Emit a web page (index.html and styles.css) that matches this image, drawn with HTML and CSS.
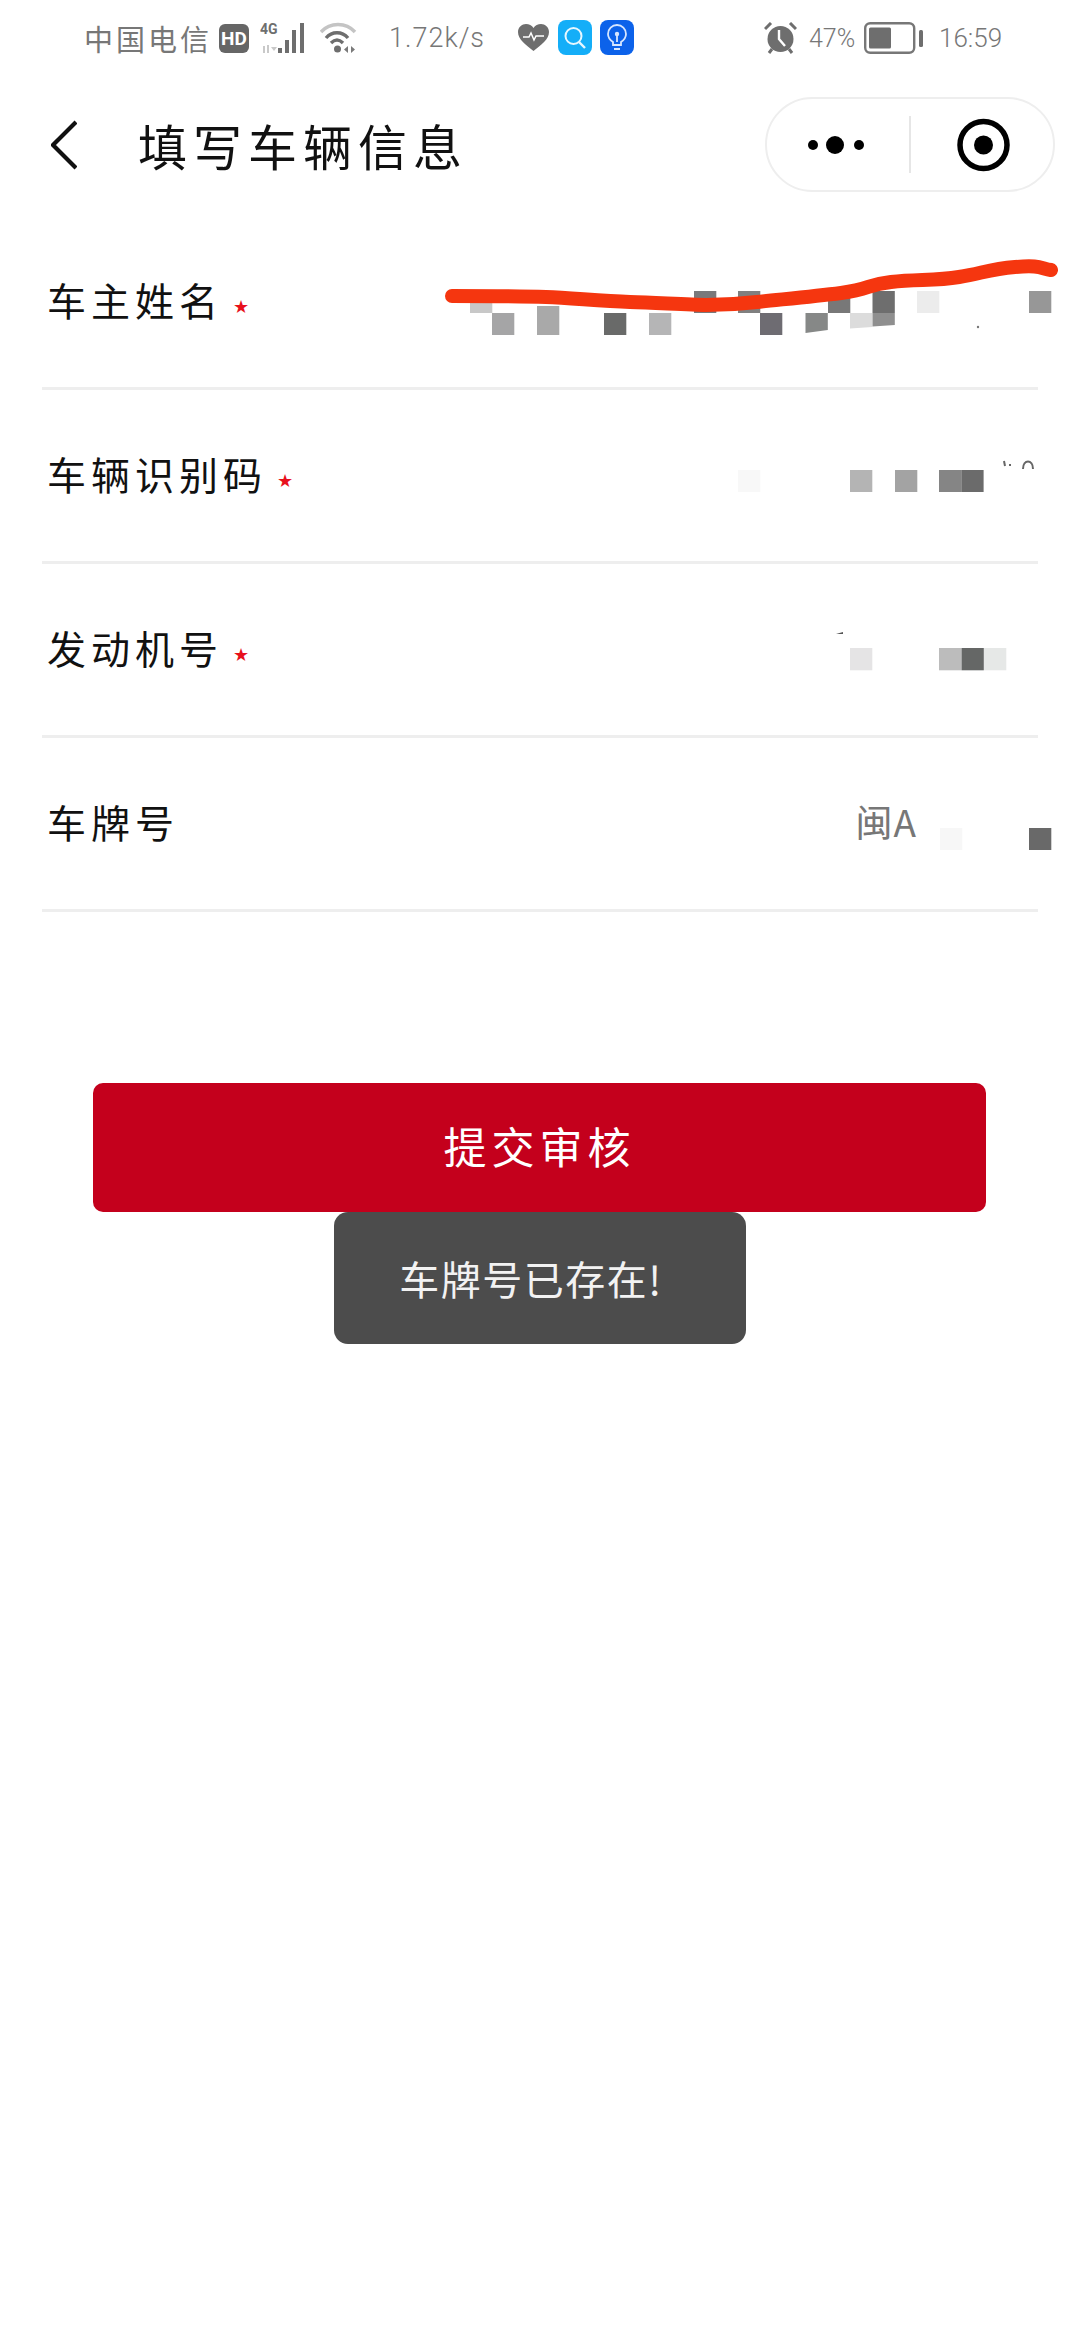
FILE: index.html
```html
<!DOCTYPE html>
<html lang="zh-CN">
<head>
<meta charset="utf-8">
<title>填写车辆信息</title>
<link rel="stylesheet" href="styles.css">
</head>
<body>
<div class="page">
  <div class="status">
    <span class="carrier">中国电信</span>
    <span class="hd">HD</span>
    <svg class="net" width="50" height="32" viewBox="0 0 50 32">
      <text x="0" y="12" class="net-label">4G</text>
      <path d="M4 24v7M8 23v8" stroke="#c9c9c9" stroke-width="2" fill="none"/>
      <path d="M11 25l3 4 3-4z" fill="#c9c9c9"/>
      <rect x="18" y="26" width="4" height="5" fill="#6e6e6e"/>
      <rect x="25" y="18" width="4" height="13" fill="#6e6e6e"/>
      <rect x="32" y="8" width="4" height="23" fill="#6e6e6e"/>
      <rect x="40" y="1" width="4" height="30" fill="#6e6e6e"/>
    </svg>
    <svg class="wifi" width="37" height="32" viewBox="0 0 37 32">
      <path d="M1 10C10 0 26 0 35 10" stroke="#c4c4c4" stroke-width="3.4" fill="none"/>
      <path d="M6 16C12 9 22 9 28 16" stroke="#6e6e6e" stroke-width="3.4" fill="none"/>
      <path d="M11 21C15 17 19 17 23 21" stroke="#6e6e6e" stroke-width="3.4" fill="none"/>
      <circle cx="17.500" cy="27" r="3.500" fill="#6e6e6e"/>
      <path d="M28 24l-4 3.500 4 3.500zM31 24l4 3.500-4 3.500z" fill="#7a7a7a"/>
    </svg>
    <span class="speed">1.72k/s</span>
    <svg class="heart" width="31" height="28" viewBox="0 0 31 28">
      <path d="M15.500 27C8 21 0 15.500 0 8 0 3 4 0 8 0c3 0 6 1.500 7.500 4C17 1.500 20 0 23 0c4 0 8 3 8 8 0 7.500-8 13-15.500 19z" fill="#6e6e6e"/>
      <path d="M5 13h6l2-4 3 7 2-4h8" stroke="#fff" stroke-width="1.500" fill="none"/>
    </svg>
    <svg class="app" width="34" height="35" viewBox="0 0 34 35">
      <rect width="34" height="35" rx="8" fill="#14aef8"/>
      <circle cx="15.500" cy="16" r="8" stroke="#e6f7ff" stroke-width="2" fill="none"/>
      <path d="M21 22l6 6" stroke="#e6f7ff" stroke-width="2.400"/>
    </svg>
    <svg class="app bulb" width="34" height="35" viewBox="0 0 34 35">
      <rect width="34" height="35" rx="8" fill="#0c62ea"/>
      <path d="M13 25v-3c-3-2-5-4-5-8a9 9 0 0 1 18 0c0 4-2 6-5 8v3z" stroke="#d6e6ff" stroke-width="1.800" fill="none"/>
      <path d="M14 29h6M17 15v7" stroke="#d6e6ff" stroke-width="1.800"/>
      <circle cx="17" cy="14" r="2.200" fill="#d6e6ff"/>
    </svg>
    <span class="status-gap"></span>
    <svg class="alarm" width="33" height="32" viewBox="0 0 33 32">
      <circle cx="16.500" cy="17" r="13" fill="#6e6e6e"/>
      <path d="M1 7l6-6M32 7l-6-6" stroke="#6e6e6e" stroke-width="3"/>
      <path d="M5 31l3-4M28 31l-3-4" stroke="#6e6e6e" stroke-width="3"/>
      <path d="M15 8v9l6 7" stroke="#fff" stroke-width="2.400" fill="none"/>
    </svg>
    <span class="percent">47%</span>
    <svg class="battery" width="59" height="32" viewBox="0 0 59 32">
      <rect x="1.200" y="1.200" width="49" height="29.600" rx="5" stroke="#777" stroke-width="2.400" fill="none"/>
      <rect x="5" y="5.500" width="22" height="21" rx="1.500" fill="#6e6e6e"/>
      <rect x="55" y="8" width="4" height="17" rx="1.500" fill="#6e6e6e"/>
    </svg>
    <span class="time">16:59</span>
  </div>

  <header class="nav">
    <svg class="back" width="26" height="50" viewBox="0 0 26 50">
      <path d="M25 2L2 25l23 23" stroke="#111" stroke-width="4.200" fill="none"/>
    </svg>
    <h1 class="title">填写车辆信息</h1>
    <div class="capsule">
      <svg class="more" width="142" height="20" viewBox="0 0 142 20">
        <circle cx="46" cy="10" r="5" fill="#000"/>
        <circle cx="68" cy="10" r="9" fill="#000"/>
        <circle cx="92" cy="10" r="5" fill="#000"/>
      </svg>
      <span class="capsule-divider"></span>
      <svg class="target" width="140" height="56" viewBox="0 0 140 56">
        <circle cx="72.500" cy="28" r="23.500" stroke="#000" stroke-width="5.500" fill="none"/>
        <circle cx="72.500" cy="28" r="9.500" fill="#000"/>
      </svg>
    </div>
  </header>

  <main class="form">
    <div class="row"><span class="label">车主姓名<span class="star">★</span></span></div>
    <div class="row"><span class="label">车辆识别码<span class="star">★</span></span></div>
    <div class="row"><span class="label">发动机号<span class="star">★</span></span></div>
    <div class="row"><span class="label">车牌号</span><span class="value">闽A</span></div>
  </main>

  <button class="submit">提交审核</button>

  <svg class="redaction" width="1080" height="900" viewBox="0 0 1080 900">
    <rect x="470" y="303" width="22.300" height="10" fill="#c8c8c8"/>
    <rect x="492" y="313" width="22.300" height="22" fill="#a5a5a6"/>
    <rect x="537" y="306" width="22.300" height="29" fill="#a9a9a9"/>
    <rect x="604" y="313" width="22.300" height="22" fill="#696a69"/>
    <rect x="649" y="313" width="22.300" height="22" fill="#b5b5b6"/>
    <rect x="694" y="291" width="22.300" height="22" fill="#79797b"/>
    <rect x="738" y="291" width="22.300" height="22" fill="#808080"/>
    <rect x="760" y="313" width="22.300" height="22" fill="#6e6c72"/>
    <path d="M805.500 313h22.300v17l-22.300 3z" fill="#868887"/>
    <rect x="828" y="295" width="22.300" height="18" fill="#787878"/>
    <path d="M850 313h22.300v14l-22.300 1.500z" fill="#dcdcdc"/>
    <rect x="872.500" y="291" width="22.300" height="22" fill="#6e6e6e"/>
    <path d="M872.500 313h22.300v12l-22.300 1.500z" fill="#8f8f8f"/>
    <rect x="917" y="291" width="22.300" height="22" fill="#ececec"/>
    <rect x="1029" y="291" width="22.300" height="22" fill="#979797"/>
    <circle cx="978" cy="327" r="1.200" fill="#777"/>
    <path d="M452 296C490 296 520 296 546 297S600 301 630 302 690 305 706 305 740 304 757 302 810 297 841 293 865 285 891 282 935 281 959 277 990 269 1015 267 1040 268 1051 270" stroke="#f5360f" stroke-width="14" stroke-linecap="round" fill="none"/>

    <rect x="738" y="470" width="22.300" height="22" fill="#f8f8f8"/>
    <rect x="850" y="470" width="22.300" height="22" fill="#b4b4b4"/>
    <rect x="895" y="470" width="22.300" height="22" fill="#a3a3a3"/>
    <rect x="939" y="470" width="22.300" height="22" fill="#858585"/>
    <rect x="961.300" y="470" width="22.300" height="22" fill="#6b6b6b"/>
    <path d="M1004 461l1 5M1010 464v2M1023 469c0-10 10-10 10 0" stroke="#666" stroke-width="2" fill="none"/>

    <path d="M836 634l7-2v2z" fill="#555"/>
    <rect x="850" y="648" width="22.300" height="22.300" fill="#e5e4e5"/>
    <rect x="939" y="648" width="22.300" height="22.300" fill="#bcbcbc"/>
    <rect x="961.500" y="648" width="22.300" height="22.300" fill="#656766"/>
    <rect x="984" y="648" width="22.300" height="22.300" fill="#e6e8e7"/>

    <rect x="940" y="828" width="22.300" height="22" fill="#f7f7f7"/>
    <rect x="1029" y="828" width="22.300" height="22" fill="#696969"/>
  </svg>

  <div class="toast">车牌号已存在!</div>
</div>
</body>
</html>
```

FILE: styles.css
```css
* { box-sizing: border-box; }

html, body {
  margin: 0;
  padding: 0;
  background: #fff;
}

body {
  font-family: "Noto Sans CJK SC", "Noto Sans", sans-serif;
  color: #111;
}

.page {
  position: relative;
  width: 1080px;
  height: 2340px;
  overflow: hidden;
  background: #fff;
}

/* status bar */
.status {
  display: flex;
  align-items: center;
  height: 76px;
  padding: 0 79px 0 84px;
  color: #777;
}

.carrier {
  width: 127px;
  font-size: 29px;
  letter-spacing: 3px;
  line-height: 36px;
  white-space: nowrap;
}

.hd {
  display: flex;
  align-items: center;
  justify-content: center;
  width: 30px;
  height: 29px;
  margin-left: 8px;
  border-radius: 6px;
  background: #666;
  color: #fff;
  font-family: Roboto, sans-serif;
  font-size: 19px;
  font-weight: 700;
}

.net { margin-left: 11px; }
.net-label {
  font-family: Roboto, sans-serif;
  font-size: 14px;
  font-weight: 700;
  fill: #6e6e6e;
}

.wifi { margin-left: 10px; }

.speed {
  width: 95px;
  margin-left: 32px;
  font-family: Roboto, sans-serif;
  font-size: 27px;
  font-weight: 300;
  letter-spacing: 1px;
  white-space: nowrap;
}

.heart { margin-left: 34px; }
.app { margin-left: 9px; margin-top: -1px; }
.bulb { margin-left: 8px; }
.status-gap { flex: 1; }

.percent {
  width: 46px;
  margin-left: 12px;
  font-family: Roboto, sans-serif;
  font-size: 25px;
  font-weight: 300;
  white-space: nowrap;
}

.battery { margin-left: 9px; }

.time {
  width: 62px;
  margin-left: 16px;
  font-family: Roboto, sans-serif;
  font-size: 26px;
  font-weight: 300;
  white-space: nowrap;
}

/* navigation */
.nav {
  display: flex;
  align-items: center;
  height: 140px;
  padding: 0 25px 3px 51px;
}

.back { flex: none; }

.title {
  flex: 1;
  margin: 0 0 0 61px;
  font-size: 49px;
  font-weight: 400;
  letter-spacing: 6px;
  line-height: 60px;
  color: #111;
}

.capsule {
  display: flex;
  flex: none;
  align-items: center;
  width: 290px;
  height: 95px;
  border: 2px solid #eeeeee;
  border-radius: 48px;
}

.capsule-divider {
  flex: none;
  width: 2px;
  height: 57px;
  background: #e6e6e6;
}

.more { flex: none; }
.target { flex: none; }

/* form */
.form {
  margin: 0 42px;
}

.row {
  display: flex;
  align-items: center;
  justify-content: space-between;
  height: 174px;
  padding-bottom: 6px;
  border-bottom: 3px solid #eeeeee;
}

.label {
  padding-left: 5px;
  font-size: 39px;
  letter-spacing: 5px;
  line-height: 50px;
  color: #111;
}

.star {
  margin-left: 10px;
  font-family: "DejaVu Sans", sans-serif;
  font-size: 18px;
  letter-spacing: 0;
  line-height: 0;
  color: #e8101c;
  vertical-align: 3px;
}

.value {
  margin-right: 121px;
  font-size: 37px;
  letter-spacing: 1px;
  line-height: 44px;
  color: #777;
}

/* submit */
.submit {
  display: block;
  width: 893px;
  height: 129px;
  margin: 171px 0 0 93px;
  padding: 0 0 6px;
  border: 0;
  border-radius: 10px;
  background: #c4001c;
  color: #fff;
  font-family: "Noto Sans CJK SC", sans-serif;
  font-size: 43px;
  letter-spacing: 5px;
}

/* overlays */
.redaction {
  position: absolute;
  top: 0;
  left: 0;
  pointer-events: none;
}

.toast {
  position: absolute;
  top: 1212px;
  left: 334px;
  display: flex;
  align-items: center;
  justify-content: center;
  width: 412px;
  height: 132px;
  padding-right: 18px;
  border-radius: 14px;
  background: #4c4c4c;
  color: #f2f2f2;
  font-size: 40px;
  letter-spacing: 1.500px;
}
```
